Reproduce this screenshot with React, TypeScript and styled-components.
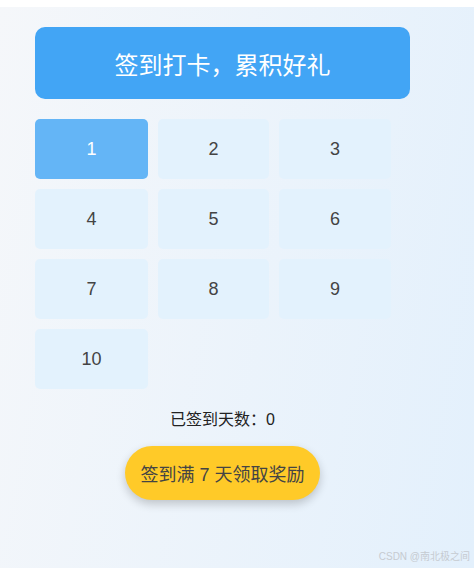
import React, { useState } from 'react'
import styled, { createGlobalStyle } from 'styled-components'

const GlobalStyle = createGlobalStyle`
    html, body {
        margin: 0;
        padding: 0;
        background: #fff;
    }
    body {
        padding-top: 7px;
        font-family: "Liberation Sans", "Noto Sans CJK SC", sans-serif;
    }
`

const Page = styled.div`
    position: relative;
    box-sizing: border-box;
    min-height: 561px;
    padding: 20px 35px;
    background: linear-gradient(100deg, #f5f7fa 0%, #e3f0fc 100%);
`

const Panel = styled.div`
    width: 375px;
    display: flex;
    flex-direction: column;
`

const Header = styled.div`
    height: 72px;
    border-radius: 10px;
    background-color: #42a5f5;
    color: #fff;
    font-size: 24px;
    display: flex;
    align-items: center;
    justify-content: center;
`

const Grid = styled.div`
    margin-top: 20px;
    display: grid;
    grid-template-columns: 113px 111px 112px;
    grid-auto-rows: 60px;
    gap: 10px;
`

const Day = styled.div<{ $checked: boolean }>`
    border-radius: 5px;
    display: flex;
    align-items: center;
    justify-content: center;
    font-size: 18px;
    color: ${p => (p.$checked ? '#fff' : '#444')};
    background-color: ${p => (p.$checked ? '#64b5f6' : '#e3f2fd')};
    cursor: pointer;
`

const Count = styled.div`
    margin-top: 19px;
    text-align: center;
    font-size: 16px;
    line-height: 24px;
    color: #222;
`

const Reward = styled.button`
    align-self: center;
    margin-top: 14px;
    height: 54px;
    padding: 0 15px;
    border: none;
    border-radius: 27px;
    background-color: #ffca28;
    color: #444;
    font-family: inherit;
    font-size: 18px;
    box-shadow: 0 4px 10px rgba(0, 0, 0, 0.2);
    cursor: pointer;
`

const Watermark = styled.div`
    position: absolute;
    right: 4px;
    bottom: 5px;
    font-size: 10px;
    color: #c6cbd1;
`

const App = () => {
    const [checked] = useState<number[]>([1])
    const days = Array.from({ length: 10 }, (_, i) => i + 1)

    return (
        <>
            <GlobalStyle />
            <Page>
                <Panel>
                    <Header>签到打卡，累积好礼</Header>
                    <Grid>
                        {days.map(day => (
                            <Day key={day} $checked={checked.includes(day)}>
                                {day}
                            </Day>
                        ))}
                    </Grid>
                    <Count>已签到天数：0</Count>
                    <Reward>签到满 7 天领取奖励</Reward>
                </Panel>
                <Watermark>CSDN @南北极之间</Watermark>
            </Page>
        </>
    )
}

export default App
